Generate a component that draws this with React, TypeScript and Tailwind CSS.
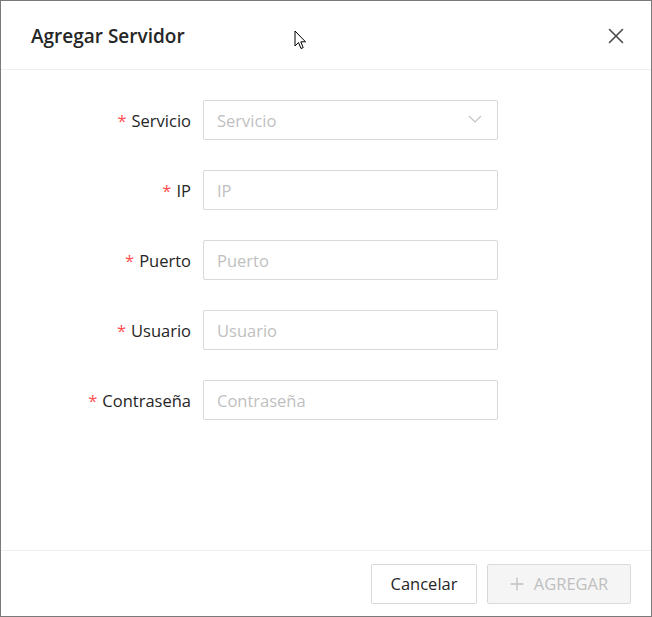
const fields = [
  { label: "Servicio", select: true },
  { label: "IP" },
  { label: "Puerto" },
  { label: "Usuario" },
  { label: "Contraseña" },
];

function Cursor() {
  return (
    <svg className="absolute left-[293px] top-[29px]" width="13" height="21" viewBox="0 0 13 21">
      <path d="M1 1 L1 16 L4.5 12.5 L7 18.5 L9.2 17.6 L6.8 11.8 L11.5 11.8 Z" fill="#fff" stroke="#000" strokeWidth="1" strokeLinejoin="round" />
    </svg>
  );
}

export default function App() {
  return (
    <div className="relative flex h-[617px] w-[652px] flex-col border border-[#7a7a7a] bg-white font-['Open_Sans',sans-serif] text-[#262626]">
      <div className="flex h-[69px] items-center justify-between border-b border-[#f0f0f0] pl-[30px] pr-[27px]">
        <h2 className="pt-[2px] text-[19px] font-semibold text-[#262626]">Agregar Servidor</h2>
        <svg width="16" height="16" viewBox="0 0 16 16" className="mt-[2px]">
          <path d="M1.5 1.5 L14.5 14.5 M14.5 1.5 L1.5 14.5" stroke="#4a4a4a" strokeWidth="1.6" strokeLinecap="round" />
        </svg>
      </div>

      <div className="flex flex-1 flex-col gap-[30px] pt-[30px]">
        {fields.map((f) => (
          <div key={f.label} className="flex items-center">
            <label className="w-[190px] pt-[2px] text-right text-[16.5px]">
              <span className="mr-[5px] text-[#ff4d4f]">*</span>
              {f.label}
            </label>
            <div className="ml-[12px] flex h-[40px] w-[295px] items-center justify-between rounded-[2px] border border-[#d9d9d9] pl-[13px] pr-[15px] pt-[2px] text-[16.5px] text-[#bfbfbf]">
              <span>{f.label}</span>
              {f.select && (
                <svg width="14" height="8" viewBox="0 0 14 8" className="-mt-[4px]">
                  <path d="M1 1 L7 7 L13 1" fill="none" stroke="#c4c4c4" strokeWidth="1.2" />
                </svg>
              )}
            </div>
          </div>
        ))}
      </div>

      <div className="flex h-[66px] items-center justify-end gap-[10px] border-t border-[#f0f0f0] pr-[20px]">
        <button className="h-[40px] w-[106px] rounded-[2px] border border-[#d9d9d9] bg-white pt-[2px] text-[16.5px] text-[#262626]">
          Cancelar
        </button>
        <button className="flex h-[40px] w-[144px] items-center justify-center gap-[10px] rounded-[2px] border border-[#d9d9d9] bg-[#f5f5f5] pt-[2px] text-[16.5px] text-[#bfbfbf]">
          <svg width="14" height="14" viewBox="0 0 14 14" className="-mt-[2px]">
            <path d="M7 0.5 V13.5 M0.5 7 H13.5" stroke="#bfbfbf" strokeWidth="1.3" />
          </svg>
          AGREGAR
        </button>
      </div>
      <Cursor />
    </div>
  );
}
